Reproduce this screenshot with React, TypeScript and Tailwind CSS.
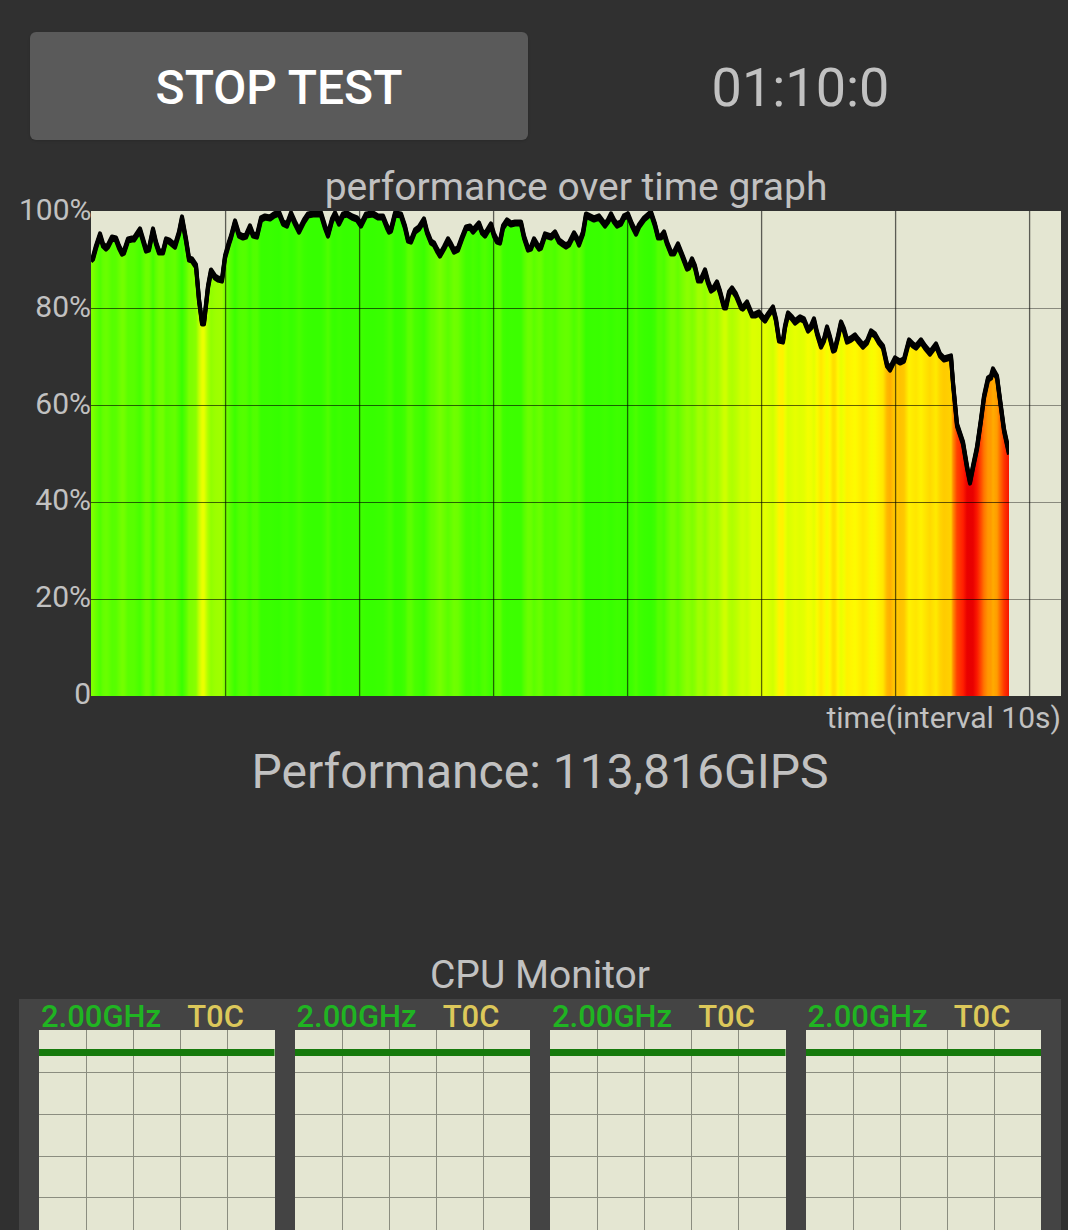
import React from 'react';

interface CoreReading {
  id: number;
  frequency: string;
  temperature: string;
}

type Point = [number, number];

const CHART_WIDTH = 970;
const CHART_HEIGHT = 485;

const axisLabels = ['100%', '80%', '60%', '40%', '20%', '0'];

const cores: CoreReading[] = [
  { id: 0, frequency: '2.00GHz', temperature: 'T0C' },
  { id: 1, frequency: '2.00GHz', temperature: 'T0C' },
  { id: 2, frequency: '2.00GHz', temperature: 'T0C' },
  { id: 3, frequency: '2.00GHz', temperature: 'T0C' },
];

// [x, y] samples in chart units, y grows downwards from 100%
const samples: Point[] = [
  [0, 49], [2, 47], [5, 36], [9, 24], [12, 34], [15, 37], [17, 35], [21, 27], [25, 28], [28, 36], [31, 42],
  [33, 41], [37, 29], [41, 28], [43, 28], [49, 19], [52, 29], [55, 39], [58, 38], [62, 19], [65, 32], [68, 41],
  [72, 41], [75, 29], [78, 30], [84, 35], [88, 22], [91, 7], [95, 29], [98, 48], [101, 49], [105, 55],
  [108, 89], [111, 112], [113, 112], [117, 76], [120, 60], [124, 66], [127, 68], [131, 69], [134, 46],
  [138, 32], [140, 26], [144, 11], [148, 24], [152, 26], [155, 25], [159, 16], [162, 24], [166, 25],
  [170, 8], [174, 6], [179, 7], [183, 4], [188, 2], [192, 12], [196, 14], [200, 3], [204, 12], [208, 20],
  [213, 10], [217, 4], [222, 3], [230, 3], [234, 16], [237, 24], [241, 9], [244, 3], [248, 12], [252, 4],
  [256, 3], [261, 6], [266, 8], [270, 14], [275, 4], [282, 3], [287, 6], [292, 6], [296, 16], [298, 20],
  [300, 19], [304, 3], [310, 4], [314, 16], [317, 29], [320, 30], [324, 20], [328, 17], [333, 9],
  [336, 21], [340, 31], [343, 33], [346, 39], [349, 44], [353, 37], [357, 29], [360, 34], [363, 40],
  [367, 38], [371, 27], [375, 17], [379, 16], [382, 20], [388, 13], [391, 21], [394, 24], [400, 14],
  [403, 24], [406, 30], [409, 31], [412, 16], [416, 10], [420, 13], [424, 12], [430, 12], [433, 26],
  [437, 38], [440, 37], [443, 29], [446, 34], [448, 37], [450, 36], [454, 24], [460, 26], [464, 22],
  [468, 30], [472, 33], [475, 35], [478, 33], [483, 23], [486, 28], [488, 33], [492, 22], [495, 4],
  [499, 6], [503, 8], [508, 6], [511, 10], [514, 14], [517, 10], [520, 4], [523, 10], [526, 14],
  [530, 12], [533, 6], [537, 4], [541, 14], [545, 22], [548, 15], [553, 8], [560, 2], [564, 14],
  [567, 26], [570, 26], [573, 22], [576, 32], [580, 42], [583, 42], [587, 34], [591, 44], [596, 57],
  [598, 56], [601, 49], [604, 56], [607, 69], [610, 69], [614, 60], [617, 71], [620, 79], [623, 77],
  [626, 72], [629, 81], [633, 96], [635, 96], [638, 82], [641, 78], [645, 84], [650, 96], [652, 97],
  [656, 92], [661, 104], [664, 104], [668, 102], [671, 106], [674, 109], [677, 104], [682, 97],
  [685, 109], [688, 129], [692, 130], [694, 116], [697, 103], [701, 107], [704, 111], [709, 107],
  [713, 109], [717, 119], [720, 116], [723, 109], [726, 122], [730, 135], [733, 129], [736, 117],
  [739, 127], [742, 139], [744, 138], [747, 126], [750, 112], [753, 119], [756, 130], [760, 128],
  [764, 125], [767, 129], [772, 135], [776, 131], [780, 121], [784, 124], [788, 131], [792, 136],
  [796, 154], [799, 158], [804, 148], [809, 151], [813, 149], [818, 130], [822, 134], [825, 136],
  [830, 130], [834, 136], [839, 142], [845, 134], [849, 144], [853, 148], [860, 146], [862, 172],
  [866, 214], [872, 232], [876, 256], [879, 271], [882, 256], [886, 237], [890, 209], [893, 186],
  [897, 168], [900, 166], [902, 159], [906, 166], [909, 189], [913, 219], [918, 242],
];

// performance percentage -> rgb, highest first
const colorScale: { at: number; rgb: [number, number, number] }[] = [
  { at: 100, rgb: [52, 255, 0] },
  { at: 97, rgb: [62, 255, 0] },
  { at: 94, rgb: [90, 255, 0] },
  { at: 91, rgb: [118, 255, 0] },
  { at: 86, rgb: [158, 255, 0] },
  { at: 80, rgb: [208, 255, 0] },
  { at: 76, rgb: [240, 255, 0] },
  { at: 74, rgb: [255, 250, 0] },
  { at: 70, rgb: [255, 210, 0] },
  { at: 67, rgb: [255, 168, 0] },
  { at: 62, rgb: [255, 120, 0] },
  { at: 52, rgb: [255, 30, 0] },
  { at: 47, rgb: [232, 0, 0] },
];

function colorFor(percent: number) {
  const last = colorScale[colorScale.length - 1];
  if (percent <= last.at) return `rgb(${last.rgb.join(',')})`;

  const index = colorScale.findIndex((stop) => percent >= stop.at);
  if (index <= 0) return `rgb(${colorScale[0].rgb.join(',')})`;

  const upper = colorScale[index - 1];
  const lower = colorScale[index];
  const t = (percent - lower.at) / (upper.at - lower.at);
  const mixed = lower.rgb.map((c, i) => Math.round(c + (upper.rgb[i] - c) * t));
  return `rgb(${mixed.join(',')})`;
}

function PerformanceChart() {
  const endX = samples[samples.length - 1][0];
  const line = samples.map(([x, y]) => `${x},${y}`).join(' ');
  const columns = [134, 268, 402, 536, 670, 804, 938];
  const rows = [97, 194, 291, 388];

  return (
    <svg
      viewBox={`0 0 ${CHART_WIDTH} ${CHART_HEIGHT}`}
      className="block w-full h-auto bg-[#e4e6d2]"
      role="img"
      aria-label="performance over time graph"
    >
      <defs>
        <linearGradient id="load" gradientUnits="userSpaceOnUse" x1="0" y1="0" x2={endX} y2="0">
          {samples.map(([x, y]) => (
            <stop key={x} offset={x / endX} stopColor={colorFor(100 - (y / CHART_HEIGHT) * 100)} />
          ))}
        </linearGradient>
        <clipPath id="filled">
          <polygon points={`0,${CHART_HEIGHT} ${line} ${endX},${CHART_HEIGHT}`} />
        </clipPath>
        <clipPath id="plot">
          <rect width={endX} height={CHART_HEIGHT} />
        </clipPath>
      </defs>

      <rect width={endX} height={CHART_HEIGHT} fill="url(#load)" clipPath="url(#filled)" />

      <g stroke="#000">
        {columns.map((x) => (
          <line key={x} x1={x + 0.6} x2={x + 0.6} y1="0" y2={CHART_HEIGHT} strokeWidth="1.3" strokeOpacity="0.6" />
        ))}
        {rows.map((y) => (
          <line key={y} x1="0" x2={CHART_WIDTH} y1={y + 0.5} y2={y + 0.5} strokeOpacity="0.4" />
        ))}
        <g clipPath="url(#filled)">
          {rows.map((y) => (
            <line key={y} x1="0" x2={CHART_WIDTH} y1={y + 0.5} y2={y + 0.5} strokeOpacity="0.35" />
          ))}
        </g>
      </g>

      {/* stacked passes give the pen its taller-than-wide nib */}
      <g fill="none" stroke="#000" strokeWidth="4" strokeLinejoin="round" clipPath="url(#plot)">
        <polyline points={line} transform="translate(0 -1.6)" />
        <polyline points={line} />
        <polyline points={line} transform="translate(0 1.6)" />
      </g>
    </svg>
  );
}

function CoreCard({ core }: { core: CoreReading }) {
  return (
    <div className="min-w-0">
      <div className="flex gap-[26px] h-[31px] pl-0.5 text-[31px] leading-9 font-medium whitespace-nowrap">
        <span className="text-[#20b422]">{core.frequency}</span>
        <span className="text-[#dcc85a]">{core.temperature}</span>
      </div>
      <svg
        viewBox="0 0 235 200"
        preserveAspectRatio="none"
        className="block w-full h-[200px] bg-[#e4e6d2]"
        role="img"
        aria-label={`Core ${core.id} frequency`}
      >
        <g stroke="#8b8d80" shapeRendering="crispEdges">
          {[47, 94, 141, 188].map((x) => (
            <line key={x} x1={x + 0.5} x2={x + 0.5} y1="0" y2="200" />
          ))}
          {[42, 84, 126, 167].map((y) => (
            <line key={y} x1="0" x2="235" y1={y + 0.5} y2={y + 0.5} />
          ))}
        </g>
        <rect y="19" width="235" height="7" fill="#167a0c" />
      </svg>
    </div>
  );
}

export default function App() {
  return (
    <main className="min-h-screen bg-[#303030] pl-[19px] pr-[7px] text-[#c1c1c1] font-[Roboto,sans-serif]">
      <div className="grid grid-cols-2 items-center pt-8">
        <button
          type="button"
          className="ml-[11px] mr-3 h-[108px] pt-1 rounded-md bg-[#5a5a5a] text-white text-[48px] font-medium shadow-sm cursor-pointer"
        >
          STOP TEST
        </button>
        <div className="pt-1 text-center text-[54px] leading-[64px]">01:10:0</div>
      </div>

      <section className="pt-6">
        <h2 className="pl-[72px] text-center text-[39px] leading-[47px]">performance over time graph</h2>
        <div className="flex">
          <div className="w-[72px] shrink-0 -mt-[17px] -mb-3.5 flex flex-col justify-between text-right text-[30px] leading-8">
            {axisLabels.map((label) => (
              <span key={label}>{label}</span>
            ))}
          </div>
          <div className="flex-1 min-w-0">
            <PerformanceChart />
          </div>
        </div>
        <p className="text-right text-[30px] leading-11">time(interval 10s)</p>
      </section>

      <p className="text-center text-[48px] leading-16">Performance: 113,816GIPS</p>

      <section className="pt-[148px]">
        <h2 className="text-center text-[39px] leading-[47px]">CPU Monitor</h2>
        <div className="grid grid-cols-4 gap-5 px-5 bg-[#444444]">
          {cores.map((core) => (
            <CoreCard key={core.id} core={core} />
          ))}
        </div>
      </section>
    </main>
  );
}
